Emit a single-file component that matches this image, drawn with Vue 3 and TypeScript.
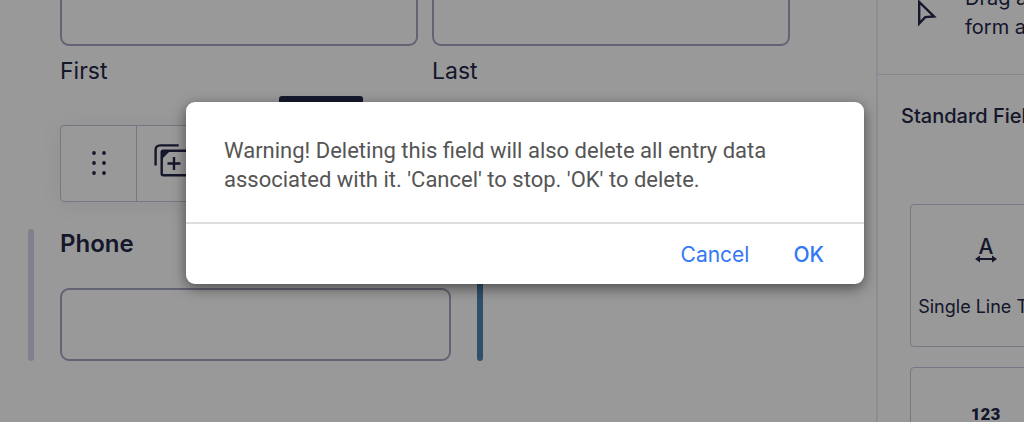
<script setup lang="ts">
import { ref } from 'vue'

const nameParts = [
  { id: 'first', label: 'First' },
  { id: 'last', label: 'Last' },
]
const values = ref<Record<string, string>>({ first: '', last: '', phone: '' })
const dialogOpen = ref(true)
const close = () => {
  dialogOpen.value = false
}
</script>

<template>
  <div class="page">
    <main class="canvas">
      <div class="names">
        <div v-for="part in nameParts" :key="part.id" class="name">
          <input :id="part.id" v-model="values[part.id]" class="box box-top" type="text" />
          <label :for="part.id" class="sub-label">{{ part.label }}</label>
        </div>
      </div>

      <div class="toolbar">
        <button type="button" class="tool tool-move" aria-label="Move">
          <svg width="16" height="28" viewBox="0 0 16 28" fill="currentColor">
            <circle cx="3" cy="4" r="1.900" /><circle cx="13" cy="4" r="1.900" />
            <circle cx="3" cy="14" r="1.900" /><circle cx="13" cy="14" r="1.900" />
            <circle cx="3" cy="24" r="1.900" /><circle cx="13" cy="24" r="1.900" />
          </svg>
        </button>
        <button type="button" class="tool" aria-label="Duplicate">
          <svg width="36" height="40" viewBox="0 0 36 40" fill="none" stroke="currentColor" stroke-width="2.400">
            <path d="M1.600 22.500V7q0-4.600 4.600-4.600h18.500" />
            <rect x="7.700" y="7.700" width="25.500" height="24.500" rx="1.500" />
            <path d="M7.500 7.500h9l-9 9z" fill="currentColor" stroke="none" />
            <path d="M20 14v13M13.500 20.500h13" />
          </svg>
        </button>
        <span class="tip"></span>
      </div>

      <section class="field">
        <span class="edge"></span>
        <div class="phone">
          <label for="phone" class="field-label">Phone</label>
          <input id="phone" v-model="values.phone" class="box" type="tel" />
        </div>
        <span class="edge edge-drop"></span>
      </section>
    </main>

    <aside class="sidebar">
      <div class="hint">
        <svg class="pointer" width="22" height="32" viewBox="0 0 22 32" fill="none" stroke="currentColor" stroke-width="2.400">
          <path d="M2.200 5v21.500l6-6.400 8.800-.6z" />
        </svg>
        <p>Drag a<br />form a</p>
      </div>
      <h2 class="group">Standard Fields</h2>
      <div class="cards">
        <button type="button" class="card">
          <svg class="glyph" width="24" height="28" viewBox="0 0 24 28">
            <text x="12" y="17" text-anchor="middle" class="letter">A</text>
            <path d="M4 22h16" stroke="currentColor" stroke-width="2" />
            <path d="M1 22l5-3.500v7zM23 22l-5-3.500v7z" fill="currentColor" />
          </svg>
          <span>Single Line Text</span>
        </button>
        <button type="button" class="card">
          <span class="digits">123</span>
        </button>
      </div>
    </aside>

    <div v-if="dialogOpen" class="backdrop">
      <div class="dialog" role="alertdialog" aria-modal="true" aria-describedby="message">
        <p id="message" class="message">
          Warning! Deleting this field will also delete all entry data associated with it. 'Cancel' to stop. 'OK' to delete.
        </p>
        <div class="actions">
          <button type="button" class="action" @click="close">Cancel</button>
          <button type="button" class="action action-ok" @click="close">OK</button>
        </div>
      </div>
    </div>
  </div>
</template>

<style>
body {
  margin: 0;
}
</style>

<style scoped>
.page {
  position: relative;
  display: flex;
  height: 100vh;
  overflow: hidden;
  background: #fff;
  color: #242748;
  font-family: Inter, "Liberation Sans", sans-serif;
}
.page * {
  box-sizing: border-box;
}
button {
  margin: 0;
  padding: 0;
  border: 0;
  background: none;
  color: inherit;
  font-family: inherit;
}
p,
h2 {
  margin: 0;
}
.canvas {
  flex: 1;
  min-width: 0;
  padding: 0 86px 0 28px;
}
.names {
  display: grid;
  grid-template-columns: 1fr 1fr;
  gap: 14px;
  padding-left: 32px;
}
.name {
  display: flex;
  flex-direction: column;
  gap: 11px;
}
.box {
  display: block;
  width: 100%;
  height: 73px;
  padding: 0 16px;
  border: 2px solid #a3a5c0;
  border-radius: 9px;
  background: #fff;
  color: inherit;
  font: inherit;
}
.box-top {
  height: 46px;
  border-top: 0;
  border-radius: 0 0 9px 9px;
}
.sub-label {
  font-size: 23px;
  line-height: 28px;
}
.toolbar {
  position: relative;
  display: flex;
  width: 148px;
  height: 77px;
  margin: 40px 0 0 32px;
  border: 1px solid #c6c7dc;
  border-radius: 4px;
  box-shadow: 0 2px 24px rgba(36, 39, 72, 0.06);
}
.tool {
  display: grid;
  flex: 1;
  padding-bottom: 2px;
  place-items: center;
}
.tool-move {
  flex: 0 0 76px;
  border-right: 1px solid #c6c7dc;
}
.tip {
  position: absolute;
  top: -30px;
  left: 218px;
  width: 84px;
  height: 50px;
  border-radius: 3px;
  background: #242748;
}
.field {
  display: flex;
  gap: 26px;
  height: 132px;
  margin-top: 27px;
}
.edge {
  width: 6px;
  border-radius: 3px;
  background: #d5d7e9;
}
.edge-drop {
  background: #4f84b4;
}
.phone {
  display: flex;
  flex-direction: column;
  width: 391px;
  gap: 29px;
}
.field-label {
  font-size: 24px;
  font-weight: 600;
  line-height: 30px;
}
.sidebar {
  flex: 0 0 148px;
  overflow: hidden;
  border-left: 2px solid #ecedf8;
  white-space: nowrap;
}
.hint {
  display: flex;
  align-items: center;
  gap: 26px;
  height: 75px;
  padding: 0 0 48px 39px;
  border-bottom: 1px solid #dfe0ef;
  font-size: 20px;
  line-height: 29px;
}
.pointer {
  flex: none;
}
.group {
  padding: 28px 0 0 23px;
  font-size: 20px;
  font-weight: 500;
  line-height: 26px;
}
.cards {
  display: grid;
  grid-template-columns: 151px;
  gap: 20px;
  padding: 75px 0 0 32px;
}
.card {
  display: flex;
  flex-direction: column;
  align-items: center;
  gap: 30px;
  height: 143px;
  padding-top: 32px;
  border: 1px solid #c6c7dc;
  border-radius: 4px;
  font-size: 18px;
  line-height: 24px;
}
.glyph {
  flex: none;
}
.letter {
  fill: currentColor;
  font-size: 21px;
  font-weight: 500;
}
.digits {
  font-family: Roboto, sans-serif;
  font-size: 17px;
  font-weight: 900;
  line-height: 28px;
}
.backdrop {
  position: absolute;
  inset: 0;
  display: flex;
  align-items: flex-start;
  justify-content: center;
  padding: 102px 0 0 26px;
  background: rgba(0, 0, 0, 0.4);
}
.dialog {
  width: 678px;
  border-radius: 9px;
  background: #fff;
  box-shadow: 0 4px 14px rgba(0, 0, 0, 0.5);
  color: #555;
}
.message {
  padding: 34px 38px 28px;
  font-family: Roboto, sans-serif;
  font-size: 22px;
  line-height: 29px;
}
.actions {
  display: flex;
  justify-content: flex-end;
  gap: 44px;
  padding: 17px 40px 15px 0;
  border-top: 2px solid #ddd;
}
.action {
  color: #3478f6;
  font-size: 21px;
  line-height: 28px;
}
.action-ok {
  font-weight: 500;
}
</style>
